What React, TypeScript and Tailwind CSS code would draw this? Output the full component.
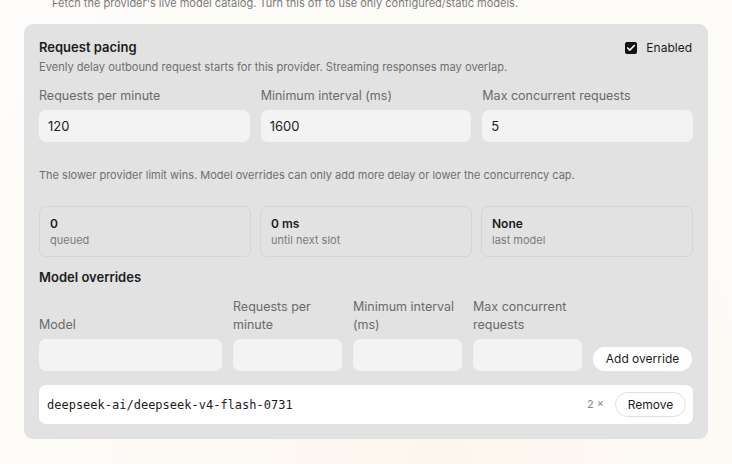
import { Check } from "lucide-react";

const stats = [
  { value: "0", label: "queued" },
  { value: "0 ms", label: "until next slot" },
  { value: "None", label: "last model" },
];

const pacingFields = [
  { label: "Requests per minute", value: "120" },
  { label: "Minimum interval (ms)", value: "1600" },
  { label: "Max concurrent requests", value: "5" },
];

export default function App() {
  const inputClass =
    "h-[32px] w-full rounded-[7px] bg-[#f3f3f3] px-[9px] text-[13px] text-[#1c1c1c] outline-none";

  return (
    <div
      className="h-[464px] w-[732px] overflow-hidden bg-[#fdfaf6] text-[#1c1c1c]"
      style={{
        fontFamily: "Inter, 'Noto Sans', sans-serif",
        backgroundImage:
          "radial-gradient(ellipse at 60% 100%, #fdf6ee 0%, #fdfaf6 45%, #fefdfb 100%)",
      }}
    >
      <p className="mt-[-5px] pl-[52px] text-[11px] leading-[16px] text-[#7a7a7a]">
        Fetch the provider's live model catalog. Turn this off to use only
        configured/static models.
      </p>

      <div className="mx-[24px] mt-[13px] rounded-[9px] bg-[#e2e2e2] px-[15px] pb-[15px] pt-[14px]">
        <div className="flex items-start justify-between">
          <div>
            <h3 className="text-[13px] font-semibold leading-[18px]">
              Request pacing
            </h3>
            <p className="mt-[3px] text-[11.1px] leading-[16px] text-[#6f6f6f]">
              Evenly delay outbound request starts for this provider. Streaming
              responses may overlap.
            </p>
          </div>
          <label className="mt-[2px] flex items-center gap-[9px] pr-[1px] text-[12px] leading-[16px]">
            <span className="flex h-[12px] w-[12px] items-center justify-center rounded-[2px] bg-[#111]">
              <Check size={10} strokeWidth={4} color="#fff" />
            </span>
            Enabled
          </label>
        </div>

        <div className="mt-[12px] grid grid-cols-3 gap-[11px]">
          {pacingFields.map((f) => (
            <div key={f.label}>
              <div className="text-[12.5px] leading-[18px] text-[#6a6a6a]">
                {f.label}
              </div>
              <input
                readOnly
                value={f.value}
                className={`${inputClass} mt-[5px]`}
              />
            </div>
          ))}
        </div>

        <p className="mt-[25px] text-[11px] leading-[16px] text-[#6f6f6f]">
          The slower provider limit wins. Model overrides can only add more
          delay or lower the concurrency cap.
        </p>

        <div className="mt-[23px] grid grid-cols-3 gap-[9px]">
          {stats.map((s) => (
            <div
              key={s.label}
              className="h-[51px] rounded-[7px] border border-[#d5d5d5] px-[10px] pt-[8px]"
            >
              <div className="text-[12px] font-semibold leading-[17px]">
                {s.value}
              </div>
              <div className="text-[11px] leading-[16px] text-[#7a7a7a]">
                {s.label}
              </div>
            </div>
          ))}
        </div>

        <h3 className="mt-[11px] text-[13px] font-semibold leading-[18px]">
          Model overrides
        </h3>

        <div className="mt-[12px] grid grid-cols-[183px_109px_109px_109px_99px] items-end gap-[11px]">
          {["Model", "Requests per minute", "Minimum interval (ms)", "Max concurrent requests"].map(
            (label) => (
              <div key={label}>
                <div className="pr-[4px] text-[12.5px] leading-[18px] text-[#6a6a6a]">
                  {label}
                </div>
                <input readOnly value="" className={`${inputClass} mt-[5px]`} />
              </div>
            )
          )}
          <button className="h-[24px] rounded-full bg-white text-[12px] text-[#1c1c1c]">
            Add override
          </button>
        </div>

        <div className="mt-[14px] flex h-[39px] items-center rounded-[7px] bg-white pl-[8px] pr-[7px]">
          <span
            className="flex-1 text-[12px] text-[#1c1c1c]"
            style={{ fontFamily: "'DejaVu Sans Mono', monospace" }}
          >
            deepseek-ai/deepseek-v4-flash-0731
          </span>
          <span className="text-[11px] text-[#8a8a8a]">2 ×</span>
          <button className="ml-[11px] h-[25px] w-[71px] rounded-full border border-[#e0e0e0] bg-white text-[12px] text-[#1c1c1c]">
            Remove
          </button>
        </div>
      </div>
    </div>
  );
}
